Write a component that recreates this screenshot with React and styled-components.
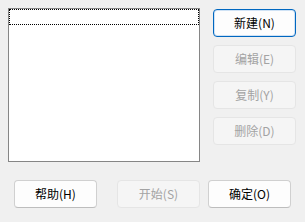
import React, { useState } from "react";
import styled, { createGlobalStyle, css } from "styled-components";

const GlobalStyle = createGlobalStyle`
  html, body {
    margin: 0;
    padding: 0;
    background: #f0f0f0;
  }
  body {
    font-family: "Noto Sans CJK SC", "Noto Sans", sans-serif;
    font-size: 12px;
  }
`;

const Dialog = styled.div`
  width: 305px;
  height: 222px;
  box-sizing: border-box;
  padding-top: 8px;
  background: #f0f0f0;
  display: flex;
  flex-direction: column;
`;

const TopRow = styled.div`
  display: flex;
  align-items: flex-start;
  padding-left: 8px;
  gap: 13px;
`;

const ListBox = styled.div`
  width: 192px;
  height: 154px;
  box-sizing: border-box;
  border: 1px solid #868686;
  background: #ffffff;
`;

const ListItem = styled.div`
  height: 16px;
  box-sizing: border-box;
  border: 1px dotted #000;
`;

const SideColumn = styled.div`
  display: flex;
  flex-direction: column;
  gap: 8px;
  padding-top: 1px;
`;

const BottomRow = styled.div`
  display: flex;
  margin-top: 18px;
  padding-left: 14px;
`;

const Button = styled.button`
  width: 83px;
  height: 28px;
  box-sizing: border-box;
  padding: 0 0 1px;
  border-radius: 4px;
  font-family: "Noto Sans CJK SC", "Noto Sans", sans-serif;
  font-size: 12px;
  line-height: 1;
  color: #000;
  background: #fdfdfd;
  border: 1px solid #d0d0d0;
  border-bottom-color: #bdbdbd;
  margin-left: ${(p) => p.$offset || 0}px;

  ${(p) =>
    p.$primary &&
    css`
      border: 1px solid #0067c0;
      box-shadow: inset 0 0 0 1px #cfe2f5;
    `}

  &:disabled {
    color: #a3a3a3;
    background: #f5f5f5;
    border-color: #e5e5e5;
  }
`;

export default function App() {
  const [items] = useState([""]);
  return (
    <>
      <GlobalStyle />
      <Dialog>
        <TopRow>
          <ListBox>
            {items.map((it, i) => (
              <ListItem key={i}>{it}</ListItem>
            ))}
          </ListBox>
          <SideColumn>
            <Button $primary>新建(N)</Button>
            <Button disabled>编辑(E)</Button>
            <Button disabled>复制(Y)</Button>
            <Button disabled>删除(D)</Button>
          </SideColumn>
        </TopRow>
        <BottomRow>
          <Button>帮助(H)</Button>
          <Button disabled $offset={20}>开始(S)</Button>
          <Button $offset={8}>确定(O)</Button>
        </BottomRow>
      </Dialog>
    </>
  );
}
